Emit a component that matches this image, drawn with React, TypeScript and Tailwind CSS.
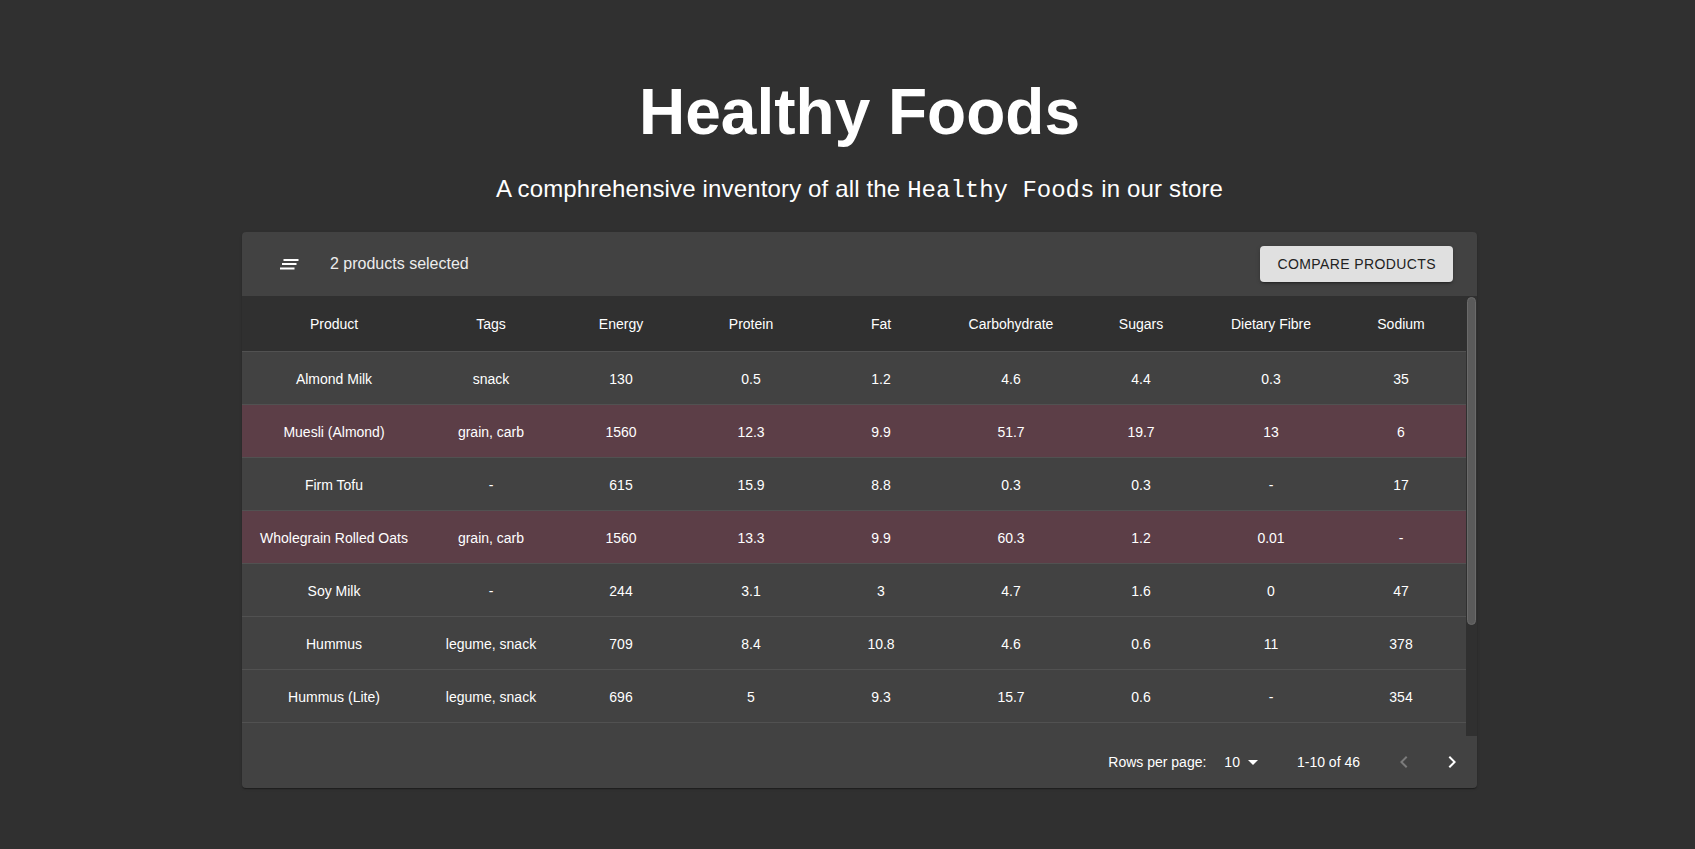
import React from 'react';

type Food = {
  name: string;
  tags: string;
  energy: string;
  protein: string;
  fat: string;
  carbs: string;
  sugars: string;
  fibre: string;
  sodium: string;
  selected?: boolean;
};

const columns = ['Product', 'Tags', 'Energy', 'Protein', 'Fat', 'Carbohydrate', 'Sugars', 'Dietary Fibre', 'Sodium'];

const foods: Food[] = [
  { name: 'Almond Milk', tags: 'snack', energy: '130', protein: '0.5', fat: '1.2', carbs: '4.6', sugars: '4.4', fibre: '0.3', sodium: '35' },
  { name: 'Muesli (Almond)', tags: 'grain, carb', energy: '1560', protein: '12.3', fat: '9.9', carbs: '51.7', sugars: '19.7', fibre: '13', sodium: '6', selected: true },
  { name: 'Firm Tofu', tags: '-', energy: '615', protein: '15.9', fat: '8.8', carbs: '0.3', sugars: '0.3', fibre: '-', sodium: '17' },
  { name: 'Wholegrain Rolled Oats', tags: 'grain, carb', energy: '1560', protein: '13.3', fat: '9.9', carbs: '60.3', sugars: '1.2', fibre: '0.01', sodium: '-', selected: true },
  { name: 'Soy Milk', tags: '-', energy: '244', protein: '3.1', fat: '3', carbs: '4.7', sugars: '1.6', fibre: '0', sodium: '47' },
  { name: 'Hummus', tags: 'legume, snack', energy: '709', protein: '8.4', fat: '10.8', carbs: '4.6', sugars: '0.6', fibre: '11', sodium: '378' },
  { name: 'Hummus (Lite)', tags: 'legume, snack', energy: '696', protein: '5', fat: '9.3', carbs: '15.7', sugars: '0.6', fibre: '-', sodium: '354' },
  { name: 'Greek Yoghurt', tags: 'snack', energy: '400', protein: '9.6', fat: '4.2', carbs: '5.1', sugars: '5.1', fibre: '-', sodium: '50' },
  { name: 'Brown Rice', tags: 'grain, carb', energy: '1500', protein: '7.5', fat: '2.5', carbs: '76', sugars: '0.7', fibre: '3.4', sodium: '5' },
  { name: 'Rolled Oats', tags: 'grain, carb', energy: '1600', protein: '12', fat: '8.5', carbs: '58', sugars: '1', fibre: '10', sodium: '2' },
];

const gridCols = 'grid grid-cols-[184px_repeat(8,130px)]';

const ListIcon = () => (
  <svg width="19" height="11" viewBox="0 0 19 11" fill="#ffffff">
    <rect x="3.5" y="0" width="15" height="2" />
    <rect x="2" y="4" width="14.5" height="2" />
    <rect x="0" y="8.5" width="14.5" height="2" />
  </svg>
);

const App: React.FC = () => {
  return (
    <div
      className="min-h-screen bg-[#303030] pl-[24px] flex flex-col items-center text-white"
      style={{ fontFamily: '"Liberation Sans", Arial, sans-serif' }}
    >
      <h1 className="mt-[80px] text-[64px] leading-none font-bold">Healthy Foods</h1>
      <p className="mt-[27px] text-[24px] leading-[36px] tracking-[0.15px]">
        A comphrehensive inventory of all the{' '}
        <code className="font-['Liberation_Mono',monospace] tracking-normal">Healthy Foods</code> in our store
      </p>

      <div className="mt-[23px] w-[1235px] bg-[#424242] rounded shadow-[0_2px_1px_-1px_rgba(0,0,0,0.2),0_1px_1px_0_rgba(0,0,0,0.14),0_1px_3px_0_rgba(0,0,0,0.12)] overflow-hidden">
        {/* Toolbar */}
        <div className="h-[64px] flex items-center pl-[38px] pr-[24px]">
          <ListIcon />
          <span className="ml-[31px] text-[16px] text-[#ececec]">2 products selected</span>
          <button className="ml-auto h-[36px] px-[17px] bg-[#e0e0e0] text-[#222222] rounded text-[14px] uppercase tracking-[0.4px] shadow-[0_3px_1px_-2px_rgba(0,0,0,0.2),0_2px_2px_0_rgba(0,0,0,0.14),0_1px_5px_0_rgba(0,0,0,0.12)]">
            Compare Products
          </button>
        </div>

        {/* Table + scrollbar */}
        <div className="flex h-[440px]">
          <div className="w-[1224px] overflow-hidden">
            <div className={`${gridCols} h-[56px] bg-[#303030] border-b border-[#515151] text-[14px]`}>
              {columns.map((c) => (
                <div key={c} className="flex items-center justify-center pt-[2px]">
                  {c}
                </div>
              ))}
            </div>
            {foods.map((f) => (
              <div
                key={f.name}
                className={`${gridCols} h-[53px] border-b border-[#515151] text-[14px] ${f.selected ? 'bg-[#5c3e47]' : ''}`}
              >
                {[f.name, f.tags, f.energy, f.protein, f.fat, f.carbs, f.sugars, f.fibre, f.sodium].map((v, i) => (
                  <div key={i} className="flex items-center justify-center pt-[2px]">
                    {v}
                  </div>
                ))}
              </div>
            ))}
          </div>
          <div className="w-[11px] bg-[#303030] pl-[1px] pr-[1px] pt-[1px]">
            <div className="h-[328px] rounded-full bg-[#5a5a5a] border border-[#6a6a6a]" />
          </div>
        </div>

        {/* Pagination */}
        <div className="h-[52px] flex items-center justify-end pr-[1px] text-[14px]">
          <span>Rows per page:</span>
          <div className="ml-[10px] mr-[32px] flex items-center pl-[8px]">
            <span>10</span>
            <svg width="24" height="24" viewBox="0 0 24 24" fill="#ffffff" className="ml-[1px]">
              <path d="M7 10l5 5 5-5z" />
            </svg>
          </div>
          <span>1-10 of 46</span>
          <div className="ml-[20px] flex">
            <div className="w-[48px] h-[48px] flex items-center justify-center">
              <svg width="24" height="24" viewBox="0 0 24 24" fill="rgba(255,255,255,0.3)">
                <path d="M15.41 16.59L10.83 12l4.58-4.59L14 6l-6 6 6 6 1.41-1.41z" />
              </svg>
            </div>
            <div className="w-[48px] h-[48px] flex items-center justify-center">
              <svg width="24" height="24" viewBox="0 0 24 24" fill="#ffffff">
                <path d="M8.59 16.59L13.17 12 8.59 7.41 10 6l6 6-6 6-1.41-1.41z" />
              </svg>
            </div>
          </div>
        </div>
      </div>
    </div>
  );
};

export default App;
